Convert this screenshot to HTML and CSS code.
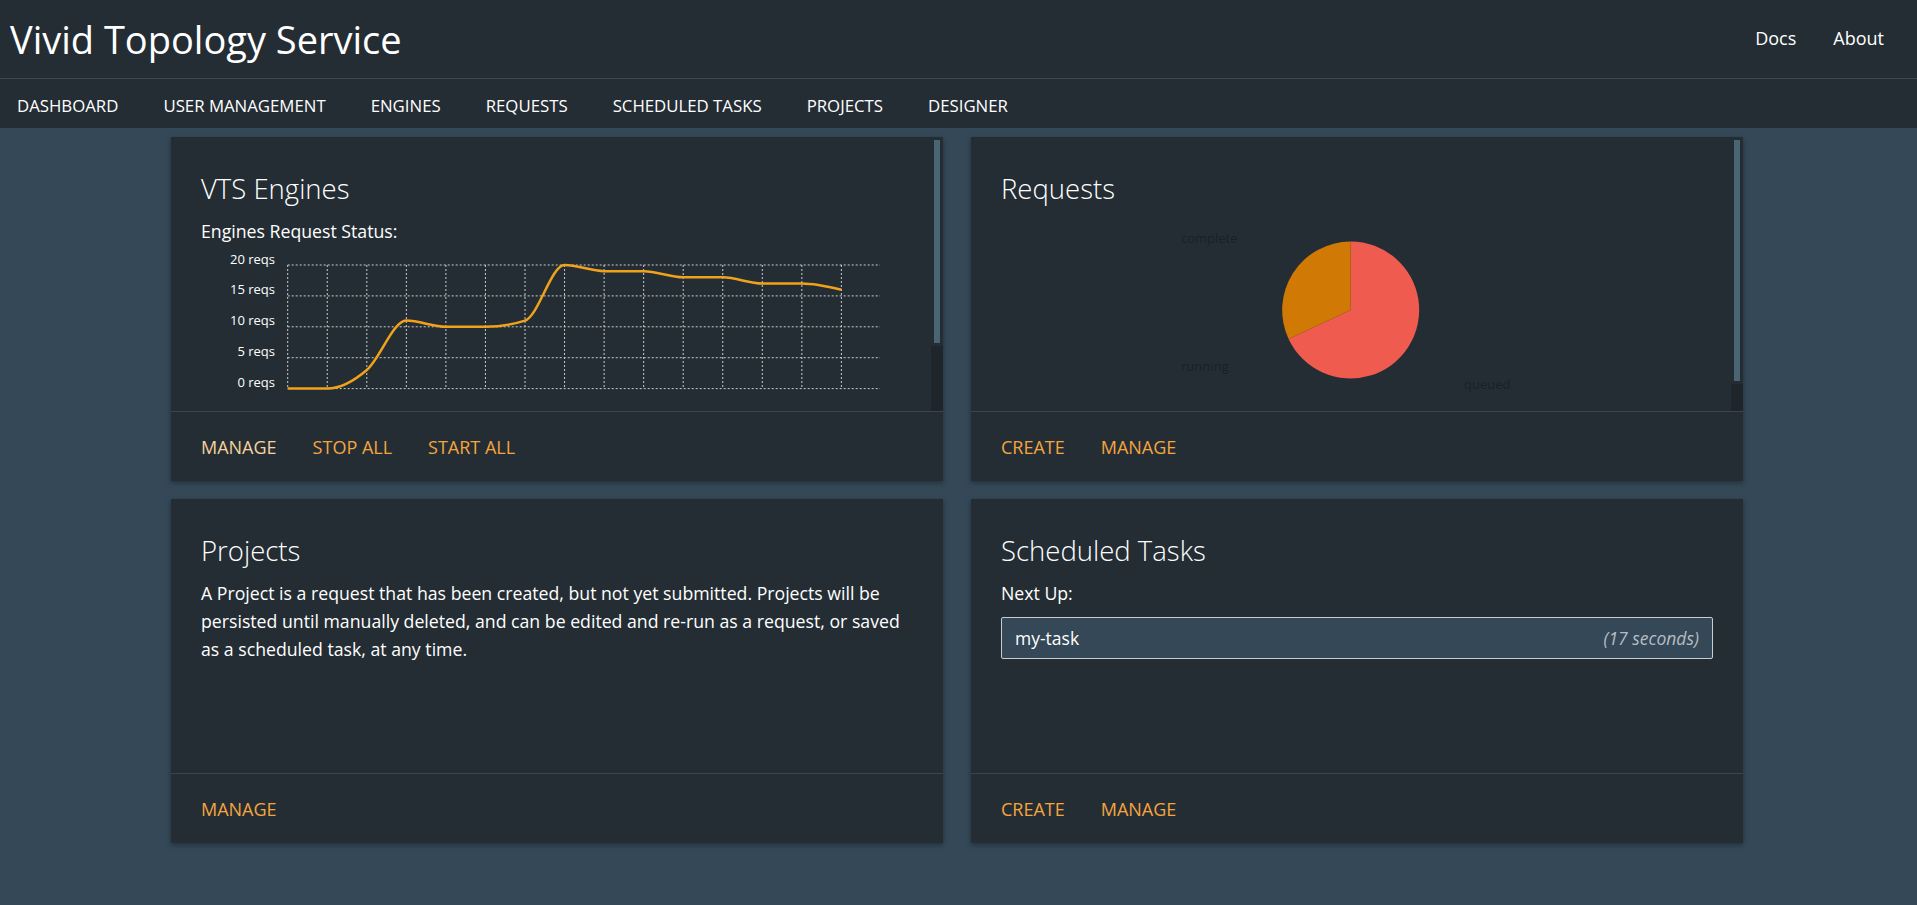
FILE: index.html
```html
<!DOCTYPE html>
<html lang="en">
<head>
<meta charset="utf-8">
<title>Vivid Topology Service</title>
<link rel="stylesheet" href="styles.css">
</head>
<body>
<header class="topbar">
  <div class="brand">Vivid Topology Service</div>
  <nav class="toplinks">
    <a href="#">Docs</a>
    <a href="#">About</a>
  </nav>
</header>
<nav class="mainnav">
  <a href="#">DASHBOARD</a>
  <a href="#">USER MANAGEMENT</a>
  <a href="#">ENGINES</a>
  <a href="#">REQUESTS</a>
  <a href="#">SCHEDULED TASKS</a>
  <a href="#">PROJECTS</a>
  <a href="#">DESIGNER</a>
</nav>
<main class="dashboard">
  <section class="card">
    <div class="card-body scrolls">
      <div class="card-content">
        <h2 class="card-title">VTS Engines</h2>
        <p class="card-text">Engines Request Status:</p>
        <svg class="line-chart" width="700" height="252" viewBox="0 0 700 252">
          <g class="grid">
            <line x1="86.7" y1="20" x2="679" y2="20"/>
            <line x1="86.7" y1="50.9" x2="679" y2="50.9"/>
            <line x1="86.7" y1="81.8" x2="679" y2="81.8"/>
            <line x1="86.7" y1="112.7" x2="679" y2="112.7"/>
            <line x1="86.7" y1="143.6" x2="679" y2="143.6"/>
            <line x1="86.7" y1="20" x2="86.7" y2="143.6"/>
            <line x1="126.25" y1="20" x2="126.25" y2="143.6"/>
            <line x1="165.8" y1="20" x2="165.8" y2="143.6"/>
            <line x1="205.35" y1="20" x2="205.35" y2="143.6"/>
            <line x1="244.9" y1="20" x2="244.9" y2="143.6"/>
            <line x1="284.45" y1="20" x2="284.45" y2="143.6"/>
            <line x1="324" y1="20" x2="324" y2="143.6"/>
            <line x1="363.55" y1="20" x2="363.55" y2="143.6"/>
            <line x1="403.1" y1="20" x2="403.1" y2="143.6"/>
            <line x1="442.65" y1="20" x2="442.65" y2="143.6"/>
            <line x1="482.2" y1="20" x2="482.2" y2="143.6"/>
            <line x1="521.75" y1="20" x2="521.75" y2="143.6"/>
            <line x1="561.3" y1="20" x2="561.3" y2="143.6"/>
            <line x1="600.85" y1="20" x2="600.85" y2="143.6"/>
            <line x1="640.4" y1="20" x2="640.4" y2="143.6"/>
          </g>
          <g class="axis-labels">
            <text x="74" y="18.5">20 reqs</text>
            <text x="74" y="49.4">15 reqs</text>
            <text x="74" y="80.3">10 reqs</text>
            <text x="74" y="111.2">5 reqs</text>
            <text x="74" y="142.1">0 reqs</text>
          </g>
          <path class="series" d="M86.7,143.6 C99.88,143.6 113.07,143.6 126.25,143.6 C139.43,143.6 152.62,136.39 165.8,125.06 C178.98,113.73 192.17,75.62 205.35,75.62 C218.53,75.62 231.72,81.8 244.9,81.8 C258.08,81.8 271.27,81.8 284.45,81.8 C297.63,81.8 310.82,79.74 324,75.62 C337.18,71.5 350.37,20 363.55,20 C376.73,20 389.92,26.18 403.1,26.18 C416.28,26.18 429.47,26.18 442.65,26.18 C455.83,26.18 469.02,32.36 482.2,32.36 C495.38,32.36 508.57,32.36 521.75,32.36 C534.93,32.36 548.12,38.54 561.3,38.54 C574.48,38.54 587.67,38.54 600.85,38.54 C614.03,38.54 627.22,41.63 640.4,44.72"/>
        </svg>
      </div>
      <div class="scrollbar"><div class="scroll-thumb thumb-engines"></div></div>
    </div>
    <div class="card-actions">
      <a href="#" class="action active">MANAGE</a>
      <a href="#" class="action">STOP ALL</a>
      <a href="#" class="action">START ALL</a>
    </div>
  </section>

  <section class="card">
    <div class="card-body scrolls">
      <div class="card-content">
        <h2 class="card-title">Requests</h2>
        <svg class="pie-chart" width="700" height="224" viewBox="0 0 700 224">
          <path class="slice-queued" d="M349.7,93 L349.7,24.5 A68.5,68.5 0 1 1 287.6,121.95 Z"/>
          <path class="slice-running" d="M349.7,93 L287.6,121.95 A68.5,68.5 0 0 1 349.7,24.5 Z"/>
          <g class="pie-labels">
            <text x="180" y="25.5">complete</text>
            <text x="180" y="154">running</text>
            <text x="463" y="171.5">queued</text>
          </g>
        </svg>
      </div>
      <div class="scrollbar"><div class="scroll-thumb thumb-requests"></div></div>
    </div>
    <div class="card-actions">
      <a href="#" class="action">CREATE</a>
      <a href="#" class="action">MANAGE</a>
    </div>
  </section>

  <section class="card">
    <div class="card-body">
      <div class="card-content">
        <h2 class="card-title">Projects</h2>
        <p class="card-text">A Project is a request that has been created, but not yet submitted. Projects will be persisted until manually deleted, and can be edited and re-run as a request, or saved as a scheduled task, at any time.</p>
      </div>
    </div>
    <div class="card-actions">
      <a href="#" class="action">MANAGE</a>
    </div>
  </section>

  <section class="card">
    <div class="card-body">
      <div class="card-content">
        <h2 class="card-title">Scheduled Tasks</h2>
        <p class="card-text">Next Up:</p>
        <div class="task">
          <span class="task-name">my-task</span>
          <span class="task-when">(17 seconds)</span>
        </div>
      </div>
    </div>
    <div class="card-actions">
      <a href="#" class="action">CREATE</a>
      <a href="#" class="action">MANAGE</a>
    </div>
  </section>
</main>
</body>
</html>
```
FILE: styles.css
```css
* {
  box-sizing: border-box;
}

html,
body {
  margin: 0;
  padding: 0;
}

body {
  background: #344857;
  color: #ffffff;
  font-family: "Open Sans", "Noto Sans", "DejaVu Sans", sans-serif;
  height: 905px;
  overflow: hidden;
}

a {
  color: inherit;
  text-decoration: none;
}

.topbar {
  height: 79px;
  background: #242d34;
  border-bottom: 1px solid #3d4850;
  display: flex;
  align-items: center;
  justify-content: space-between;
  padding: 0 33px 0 10px;
}

.brand {
  font-size: 38px;
  line-height: 1;
  white-space: nowrap;
}

.toplinks {
  display: flex;
  gap: 37px;
  font-size: 18px;
  line-height: 27px;
  padding-bottom: 2px;
}

.mainnav {
  height: 49px;
  background: #242d34;
  display: flex;
  align-items: center;
  gap: 45px;
  padding: 4px 0 0 17px;
  font-size: 16.8px;
  line-height: 24px;
}

.dashboard {
  display: grid;
  grid-template-columns: 772px 772px;
  column-gap: 28px;
  row-gap: 18px;
  justify-content: center;
  padding: 9px 3px 0 0;
}

.card {
  background: #242d34;
  box-shadow: 0 2px 5px rgba(0, 0, 0, 0.35);
  display: flex;
  flex-direction: column;
}

.card-body {
  height: 274px;
  display: flex;
}

.card-content {
  flex: 1;
  min-width: 0;
  overflow: hidden;
  padding: 35px 30px 0 30px;
}

.scrolls .card-content {
  padding-right: 18px;
}

.scrollbar {
  width: 12px;
  flex: none;
  display: flex;
  flex-direction: column;
  background: #1e262c;
}

.scroll-thumb {
  flex: none;
  background: #4b6473;
  border: 3px solid #242d34;
}

.thumb-engines {
  height: 209px;
}

.thumb-requests {
  height: 247px;
}

.card-title {
  margin: 0;
  font-size: 27.5px;
  font-weight: 300;
  line-height: 34px;
}

.card-text {
  margin: 11px 0 0;
  font-size: 17.7px;
  line-height: 28px;
}

.line-chart,
.pie-chart {
  display: block;
}

.pie-chart {
  margin-top: 11px;
}

.grid line {
  stroke: #c9ccce;
  stroke-width: 1;
  stroke-dasharray: 2 2;
}

.axis-labels text {
  fill: #ffffff;
  font-size: 13px;
  text-anchor: end;
}

.series {
  fill: none;
  stroke: #f0a21a;
  stroke-width: 2.5;
}

.slice-queued {
  fill: #ef5b4f;
}

.slice-running {
  fill: #d07a05;
}

.pie-labels text {
  fill: #1a2126;
  font-size: 13px;
}

.task {
  margin-top: 10px;
  height: 42px;
  display: flex;
  align-items: center;
  justify-content: space-between;
  padding: 0 13px;
  border: 1px solid #c9cdd0;
  border-radius: 2px;
  background: #344857;
  font-size: 17.5px;
}

.task-when {
  font-style: italic;
  color: #b5bdc3;
}

.card-actions {
  height: 70px;
  border-top: 1px solid #3a454d;
  display: flex;
  align-items: center;
  gap: 36px;
  padding: 0 30px;
  font-size: 18px;
}

.action {
  color: #f4a53f;
}

.action.active {
  color: #f5d29e;
}
```
